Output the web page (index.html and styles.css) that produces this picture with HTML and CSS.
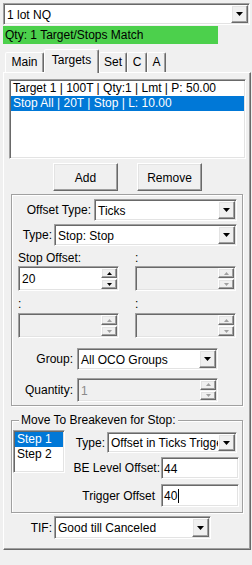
FILE: index.html
```html
<!DOCTYPE html>
<html>
<head>
<meta charset="utf-8">
<link rel="stylesheet" href="styles.css">
</head>
<body>
<div class="combo sunken top-combo"><span class="combo-text">1 lot NQ</span><span class="drop raised"><svg width="7" height="4" viewBox="0 0 7 4"><path d="M0 0H7L3.5 4Z"/></svg></span></div>
<div class="status">Qty: 1 Target/Stops Match</div>
<div class="tabs">
  <div class="tab tab-main">Main</div>
  <div class="tab tab-sel">Targets</div>
  <div class="tab tab-set">Set</div>
  <div class="tab tab-c">C</div>
  <div class="tab tab-a">A</div>
</div>
<div class="panel">
  <div class="listbox sunken targets-list">
    <div class="item">Target 1 | 100T | Qty:1 | Lmt | P: 50.00</div>
    <div class="item selected">Stop All | 20T | Stop | L: 10.00</div>
  </div>
  <div class="btn-row">
    <div class="btn raised">Add</div>
    <div class="btn raised">Remove</div>
  </div>
  <div class="group offset-group">
    <div class="frow row-offset"><span class="lbl">Offset Type:</span><div class="combo sunken w143"><span class="combo-text">Ticks</span><span class="drop raised"><svg width="7" height="4" viewBox="0 0 7 4"><path d="M0 0H7L3.5 4Z"/></svg></span></div></div>
    <div class="frow row-type"><span class="lbl">Type:</span><div class="combo sunken w183"><span class="combo-text">Stop: Stop</span><span class="drop raised"><svg width="7" height="4" viewBox="0 0 7 4"><path d="M0 0H7L3.5 4Z"/></svg></span></div></div>
    <div class="spin-grid block1">
      <span class="glbl">Stop Offset:</span><span class="glbl">:</span>
      <div class="spin sunken"><span class="spin-val">20</span><span class="spin-btns"><span class="sbtn raised"><svg width="5" height="3" viewBox="0 0 5 3"><path d="M0 3H5L2.5 0Z"/></svg></span><span class="sbtn raised"><svg width="5" height="3" viewBox="0 0 5 3"><path d="M0 0H5L2.5 3Z"/></svg></span></span></div>
      <div class="spin sunken disabled"><span class="spin-val"></span><span class="spin-btns"><span class="sbtn raised"><svg width="5" height="3" viewBox="0 0 5 3"><path d="M0 3H5L2.5 0Z"/></svg></span><span class="sbtn raised"><svg width="5" height="3" viewBox="0 0 5 3"><path d="M0 0H5L2.5 3Z"/></svg></span></span></div>
    </div>
    <div class="spin-grid block2">
      <span class="glbl">:</span><span class="glbl">:</span>
      <div class="spin sunken disabled"><span class="spin-val"></span><span class="spin-btns"><span class="sbtn raised"><svg width="5" height="3" viewBox="0 0 5 3"><path d="M0 3H5L2.5 0Z"/></svg></span><span class="sbtn raised"><svg width="5" height="3" viewBox="0 0 5 3"><path d="M0 0H5L2.5 3Z"/></svg></span></span></div>
      <div class="spin sunken disabled"><span class="spin-val"></span><span class="spin-btns"><span class="sbtn raised"><svg width="5" height="3" viewBox="0 0 5 3"><path d="M0 3H5L2.5 0Z"/></svg></span><span class="sbtn raised"><svg width="5" height="3" viewBox="0 0 5 3"><path d="M0 0H5L2.5 3Z"/></svg></span></span></div>
    </div>
    <div class="lrow row-group"><span class="llbl">Group:</span><div class="combo sunken w141"><span class="combo-text">All OCO Groups</span><span class="drop raised"><svg width="7" height="4" viewBox="0 0 7 4"><path d="M0 0H7L3.5 4Z"/></svg></span></div></div>
    <div class="lrow row-qty"><span class="llbl">Quantity:</span><div class="spin sunken disabled w141 qty"><span class="spin-val">1</span><span class="spin-btns"><span class="sbtn raised"><svg width="5" height="3" viewBox="0 0 5 3"><path d="M0 3H5L2.5 0Z"/></svg></span><span class="sbtn raised"><svg width="5" height="3" viewBox="0 0 5 3"><path d="M0 0H5L2.5 3Z"/></svg></span></span></div></div>
  </div>
  <fieldset class="be-group">
    <legend>Move To Breakeven for Stop:</legend>
    <div class="be-body">
      <div class="listbox sunken steps-list">
        <div class="item selected">Step 1</div>
        <div class="item">Step 2</div>
      </div>
      <div class="be-fields">
        <div class="frow be-type"><span class="lbl">Type:</span><div class="combo sunken w130"><span class="combo-text">Offset in Ticks Trigger</span><span class="drop raised"><svg width="7" height="4" viewBox="0 0 7 4"><path d="M0 0H7L3.5 4Z"/></svg></span></div></div>
        <div class="frow be-level"><span class="lbl">BE Level Offset:</span><div class="textbox sunken">44</div></div>
        <div class="frow be-trig"><span class="lbl">Trigger Offset</span><div class="textbox sunken">40<span class="caret"></span></div></div>
      </div>
    </div>
  </fieldset>
  <div class="tif-row"><span class="tif-lbl">TIF:</span><div class="combo sunken w157"><span class="combo-text">Good till Canceled</span><span class="drop raised"><svg width="7" height="4" viewBox="0 0 7 4"><path d="M0 0H7L3.5 4Z"/></svg></span></div></div>
</div>
</body>
</html>
```

FILE: styles.css
```css
* { box-sizing: border-box; }

body {
  margin: 0;
  width: 252px;
  height: 565px;
  overflow: hidden;
  background: #f0f0f0;
  font-family: "Liberation Sans", Arial, sans-serif;
  font-size: 12px;
  line-height: 14px;
  color: #000;
}

/* 3D borders */
.sunken {
  background: #fff;
  border: 1px solid;
  border-color: #a0a0a0 #fff #fff #a0a0a0;
  box-shadow: inset 1px 1px 0 #696969, inset -1px -1px 0 #e3e3e3;
}
.raised {
  background: #f0f0f0;
  border: 1px solid;
  border-color: #fff #696969 #696969 #fff;
  box-shadow: inset -1px -1px 0 #a0a0a0, inset 1px 1px 0 #e3e3e3;
}

/* combo box */
.combo {
  display: flex;
  padding: 1px;
  height: 22px;
}
.combo-text {
  flex: 1;
  min-width: 0;
  display: flex;
  align-items: center;
  padding-left: 2px;
  padding-top: 1px;
  overflow: hidden;
  white-space: nowrap;
}
.drop {
  flex: none;
  width: 17px;
  display: flex;
  align-items: center;
  justify-content: center;
}
.drop svg { fill: #000; }

.top-combo {
  margin: 3px 0 0 3px;
  width: 247px;
}
.w143 { width: 143px; }
.w183 { width: 183px; }
.w141 { width: 141px; }
.w130 { width: 130px; height: 21px; }
.w157 { width: 157px; height: 23px; }

/* status */
.status {
  margin: 1px 0 0 3px;
  width: 215px;
  height: 18px;
  background: #4cd04c;
  padding: 1px 0 0 2px;
  line-height: 16px;
}

/* tabs */
.tabs {
  position: relative;
  z-index: 1;
  display: flex;
  align-items: flex-end;
  height: 24px;
  margin-top: 5px;
  margin-bottom: -1px;
  padding-left: 5px;
}
.tab {
  height: 20px;
  margin-bottom: 1px;
  border: 1px solid;
  border-bottom: none;
  border-color: #fff #696969 transparent #fff;
  box-shadow: inset -1px 0 0 #a0a0a0;
  border-radius: 2px 2px 0 0;
  background: #f0f0f0;
  text-align: center;
  line-height: 18px;
}
.tab-main { width: 39px; }
.tab-sel {
  width: 55px;
  height: 24px;
  margin-bottom: 0;
  line-height: 20px;
}
.tab-set { width: 28px; }
.tab-c { width: 20px; }
.tab-a { width: 19px; }

/* panel */
.panel {
  margin-left: 3px;
  width: 248px;
  height: 478px;
  border: 1px solid;
  border-color: #fff #696969 #696969 #fff;
  box-shadow: inset -1px -1px 0 #a0a0a0;
}

.listbox {
  padding: 1px;
  overflow: hidden;
}
.item {
  height: 15px;
  line-height: 15px;
  padding-left: 2px;
  white-space: nowrap;
}
.item.selected {
  background: #0078d7;
  color: #fff;
}
.targets-list {
  margin: 6px 0 0 5px;
  width: 237px;
  height: 80px;
}

.btn-row {
  display: flex;
  gap: 19px;
  margin-top: 4px;
  padding-left: 49px;
}
.btn {
  width: 65px;
  height: 28px;
  display: flex;
  align-items: center;
  justify-content: center;
  padding-top: 2px;
}

/* etched group */
.group {
  border: 1px solid #a0a0a0;
  box-shadow: inset 1px 1px 0 #fff, 1px 1px 0 #fff;
}
.offset-group {
  margin: 3px 0 0 7px;
  width: 232px;
  height: 212px;
}

.frow {
  display: flex;
  justify-content: flex-end;
  align-items: center;
  gap: 3px;
  padding-right: 5px;
}
.row-offset { margin-top: 4px; }
.row-type { margin-top: 3px; gap: 2px; }

.spin-grid {
  display: grid;
  grid-template-columns: 101px 101px;
  grid-template-rows: 14px 25px;
  column-gap: 16px;
  padding-left: 6px;
}
.block1 { margin-top: 5px; row-gap: 1px; }
.block2 { margin-top: 6px; row-gap: 2px; }
.glbl { white-space: nowrap; }

.spin {
  display: flex;
  height: 25px;
  padding: 1px;
}
.spin.disabled { background: #f0f0f0; }
.spin-val {
  flex: 1;
  display: flex;
  align-items: center;
  padding-left: 2px;
  padding-top: 1px;
}
.spin-btns {
  flex: none;
  width: 16px;
  display: flex;
  flex-direction: column;
  gap: 1px;
}
.sbtn {
  flex: 1;
  display: flex;
  align-items: center;
  justify-content: center;
}
.sbtn svg { fill: #000; }
.disabled .sbtn svg { fill: #a0a0a0; }
.disabled .spin-val { color: #8a8a8a; }

.lrow {
  display: flex;
  align-items: center;
}
.llbl {
  width: 61px;
  margin-right: 4px;
  text-align: right;
}
.row-group { margin-top: 10px; }
.row-qty { margin-top: 8px; }
.qty { height: 24px; }

/* breakeven group */
.be-group {
  margin: 7px 0 0 7px;
  padding: 0;
  width: 232px;
  height: 100px;
  border: 1px solid #a0a0a0;
  box-shadow: inset 1px 1px 0 #fff, 1px 1px 0 #fff;
}
.be-group legend {
  margin-left: 7px;
  padding: 0 2px;
  line-height: 14px;
  background: #f0f0f0;
}
.be-body {
  display: flex;
}
.steps-list {
  margin: 3px 0 0 1px;
  width: 52px;
  height: 43px;
}
.be-fields {
  flex: 1;
  margin-top: 5px;
}
.be-type { gap: 2px; }
.be-level { margin-top: 4px; gap: 1px; padding-right: 3px; }
.be-trig { margin-top: 5px; gap: 6px; padding-right: 3px; }
.textbox {
  width: 78px;
  height: 22px;
  display: flex;
  align-items: center;
  padding: 1px 0 0 2px;
}
.be-trig .textbox { height: 23px; }
.caret {
  width: 1px;
  height: 14px;
  background: #000;
  margin-left: 1px;
}

.tif-row {
  display: flex;
  align-items: center;
  margin-top: 3px;
}
.tif-lbl {
  width: 48px;
  margin-right: 2px;
  text-align: right;
}
```
